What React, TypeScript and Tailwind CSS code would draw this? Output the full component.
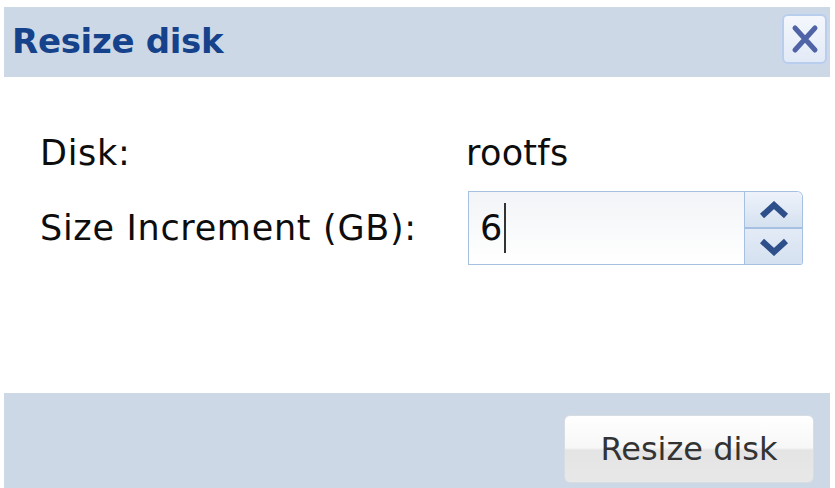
import React from "react";

export default function App() {
  return (
    <div
      className="w-[835px] h-[488px] bg-white pt-[7px] pl-[4px] pr-[5px] overflow-hidden"
      style={{ fontFamily: '"DejaVu Sans", Verdana, sans-serif' }}
    >
      <div className="flex flex-col h-full">
        {/* Header */}
        <div className="h-[70px] bg-[#cdd8e6] flex items-center justify-between pl-[8px] pr-[3px]">
          <div className="text-[34px] leading-[40px] font-bold text-[#15428b] pb-[3px] tracking-[-0.3px]">Resize disk</div>
          <div className="w-[45px] h-[50px] rounded-[6px] border-2 border-[#b9cdec] bg-gradient-to-b from-[#f4f7fc] to-[#e2eaf7] flex items-center justify-center mb-[6px] shadow-[0_0_3px_#c9d9f2]">
            <svg width="28" height="30" viewBox="0 0 28 30">
              <path d="M4 4 L24 26 M24 4 L4 26" stroke="#4f63a6" strokeWidth="5" strokeLinecap="round" />
            </svg>
          </div>
        </div>

        {/* Body */}
        <div className="flex-1 bg-white pt-[56px] pl-[36px]">
          <div className="grid grid-cols-[428px_auto] gap-y-[18px] items-center text-[35px] leading-[40px] tracking-[0.7px] text-[#0d0d0d]">
            <div>Disk:</div>
            <div className="-ml-[2px] tracking-[0.3px]">rootfs</div>
            <div>Size Increment (GB):</div>
            <div className="flex h-[74px] w-[335px]">
              <div className="flex-1 flex items-center border border-[#a6c0e2] bg-gradient-to-b from-[#f2f4f7] to-white pl-[11px]">
                <span>6</span>
                <span className="inline-block w-[2px] h-[50px] bg-[#333] ml-[1px]"></span>
              </div>
              <div className="w-[58px] flex flex-col border border-l-0 border-[#a6c0e2] rounded-tr-[6px] rounded-br-[3px] overflow-hidden">
                <div className="flex-1 flex items-center justify-center bg-gradient-to-b from-[#eef3fa] to-[#d5e1f0] border-b-2 border-[#a6c0e2]">
                  <svg width="30" height="18" viewBox="0 0 30 18">
                    <path d="M3 15 L15 4 L27 15" stroke="#2d4f8a" strokeWidth="6" fill="none" strokeLinejoin="miter" />
                  </svg>
                </div>
                <div className="flex-1 flex items-center justify-center bg-gradient-to-b from-[#e3ebf6] to-[#d5e1f0]">
                  <svg width="30" height="18" viewBox="0 0 30 18">
                    <path d="M3 3 L15 14 L27 3" stroke="#2d4f8a" strokeWidth="6" fill="none" strokeLinejoin="miter" />
                  </svg>
                </div>
              </div>
            </div>
          </div>
        </div>

        {/* Footer */}
        <div className="h-[95px] bg-[#cdd8e6] flex justify-end items-start pt-[22px] pr-[16px]">
          <div className="w-[250px] h-[68px] rounded-[6px] border border-[#d8dde4] bg-[linear-gradient(to_bottom,#ffffff_0%,#f7f7f7_48%,#e4e4e4_52%,#e8e8e8_100%)] flex items-center justify-center">
            <span className="text-[32px] leading-[40px] text-[#333]">Resize disk</span>
          </div>
        </div>
      </div>
    </div>
  );
}
